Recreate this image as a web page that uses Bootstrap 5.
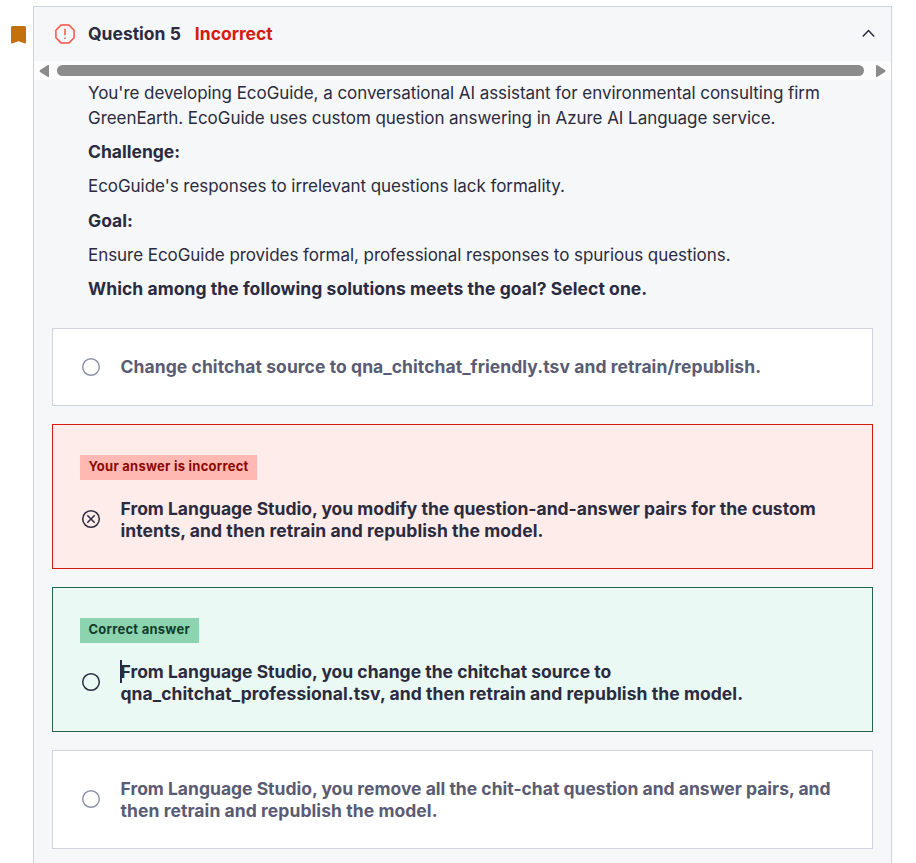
<!DOCTYPE html>
<html lang="en">
<head>
<meta charset="utf-8">
<meta name="viewport" content="width=device-width, initial-scale=1">
<title>Question 5</title>
<link href="https://cdn.jsdelivr.net/npm/bootstrap@5.3.0/dist/css/bootstrap.min.css" rel="stylesheet">
<style>
body{font-family:Inter,"Liberation Sans",sans-serif;font-size:17.5px;color:#2a2b3f;height:863px;overflow:hidden}
.bookmark{width:33px;padding:19px 0 0 11px}
.panel{width:859px;height:857px;margin-top:6px;background:#f6f7f9;border:1px solid #d1d2e0;border-bottom:0}
.panel-head{height:54px;padding:0 16px 0 21px;font-weight:700}
.panel-head .status-icon{margin-right:13px}
.chevron{margin-bottom:2px}
.wrong{color:#d41b12;margin-left:14px}
.scroller{height:19px;background:#fcfcfc;padding:0 5px}
.thumb{height:11px;border-radius:6px;background:#8b8b8b;margin:0 12px 0 8px}
.prompt{padding:.6px 54px 0;font-size:17px;line-height:25.2px;letter-spacing:-.05px}
.prompt p{margin:0 0 9px;white-space:nowrap}
.prompt .key{margin:-.8px 0 9.8px;font-size:17.5px;letter-spacing:0}
.prompt p:has(+ .key){margin-bottom:8.2px}
.prompt .key{margin-top:0}
.prompt .key,.answer{font-weight:700}
.prompt .key-wide{letter-spacing:.06px}
.answers{padding:17.4px 18px 0;gap:18px}
.answer{border:1px solid #d1d2e0;background:#fff;color:#595c73;padding:27px;line-height:21.6px}
.answer:last-child{padding-bottom:26.4px}
.answer-wrong{border-color:#d41b12;background:#feecea;color:#2a2b3f;padding-top:30px}
.answer-right{border-color:#23654b;background:#eaf9f4;color:#2a2b3f;padding-top:30px}
.choice{padding-left:1px;gap:19.5px;white-space:nowrap}
.choice-tall svg{margin-bottom:2px}
.airy{letter-spacing:.07px}
.tagline{height:25px;padding:0 8.5px;margin-bottom:18px;font-size:13px;letter-spacing:.25px;line-height:23px;width:fit-content;white-space:nowrap}
.tag-wrong{background:#ffb8b2;color:#8b0903}
.tag-right{background:#8cd4b0;color:#153b2b;padding-right:9px}
.caret{left:-.5px;top:-1px;width:2px;height:23px;background:#2a2b3f}
</style>
</head>
<body>
<div class="d-flex">
  <div class="bookmark flex-shrink-0"><svg class="d-block" width="15" height="25" viewBox="0 0 15 25"><path d="M1.5 7h12Q15 7 15 8.500V23.500Q15 25 13.500 24.300L7.500 22.300 1.500 24.300Q0 25 0 23.500V8.500Q0 7 1.500 7Z" fill="#c4710d"/></svg></div>
  <main class="panel flex-shrink-0">
    <header class="panel-head d-flex align-items-center">
      <svg class="status-icon" width="20" height="20" viewBox="0 0 20 20" fill="none" stroke="#ff5246" stroke-width="1.5"><path d="M6.200.9h7.600l5.300 5.300v7.600l-5.300 5.300H6.200L.9 13.800V6.200Z" stroke-linejoin="round"/><path d="M10 4.800v6.400M10 13.400v1.700"/></svg>
      <span>Question 5</span><span class="wrong">Incorrect</span>
      <svg class="chevron ms-auto" width="13" height="9" viewBox="0 0 13 9" fill="none" stroke="#2a2b3f" stroke-width="1.500"><path d="M.8 7.500 6.500 1.600l5.700 5.900"/></svg>
    </header>
    <div class="scroller d-flex align-items-center">
      <svg width="10" height="12" viewBox="0 0 10 12"><path d="M10 0v12H9L1 7Q0 6 1 5L9 0Z" fill="#8b8b8b"/></svg>
      <div class="thumb flex-grow-1"></div>
      <svg width="10" height="12" viewBox="0 0 10 12"><path d="M0 0v12h1l8-5q1-1 0-2L1 0Z" fill="#8b8b8b"/></svg>
    </div>
    <section class="prompt">
      <p>You're developing EcoGuide, a conversational AI assistant for environmental consulting firm<br>GreenEarth. EcoGuide uses custom question answering in Azure AI Language service.</p>
      <p class="key">Challenge:</p>
      <p>EcoGuide's responses to irrelevant questions lack formality.</p>
      <p class="key">Goal:</p>
      <p>Ensure EcoGuide provides formal, professional responses to spurious questions.</p>
      <p class="key key-wide">Which among the following solutions meets the goal? Select one.</p>
    </section>
    <section class="answers d-flex flex-column">
      <div class="answer"><div class="choice d-flex align-items-center">
        <svg width="20" height="20" viewBox="0 0 20 20" fill="none" stroke="#9194ac" stroke-width="1.500"><circle cx="10" cy="10" r="8.300"/></svg>
        <div class="airy">Change chitchat source to qna_chitchat_friendly.tsv and retrain/republish.</div></div></div>
      <div class="answer answer-wrong"><div class="tagline tag-wrong">Your answer is incorrect</div><div class="choice choice-tall d-flex align-items-center">
        <svg width="20" height="20" viewBox="0 0 20 20" fill="none" stroke="#2a2b3f" stroke-width="1.500"><circle cx="10" cy="10" r="8.300"/><path d="m6.300 6.300 7.400 7.400m0-7.400-7.400 7.400"/></svg>
        <div>From Language Studio, you modify the question-and-answer pairs for the custom<br><span class="airy">intents, and then retrain and republish the model.</span></div></div></div>
      <div class="answer answer-right"><div class="tagline tag-right">Correct answer</div><div class="choice choice-tall d-flex align-items-center">
        <svg width="20" height="20" viewBox="0 0 20 20" fill="none" stroke="#2a2b3f" stroke-width="1.500"><circle cx="10" cy="10" r="8.300"/></svg>
        <div class="position-relative"><span class="caret position-absolute"></span>From Language Studio, you change the chitchat source to<br><span class="airy">qna_chitchat_professional.tsv, and then retrain and republish the model.</span></div></div></div>
      <div class="answer"><div class="choice choice-tall d-flex align-items-center">
        <svg width="20" height="20" viewBox="0 0 20 20" fill="none" stroke="#9194ac" stroke-width="1.500"><circle cx="10" cy="10" r="8.300"/></svg>
        <div>From Language Studio, you remove all the chit-chat question and answer pairs, and<br><span class="airy">then retrain and republish the model.</span></div></div></div>
    </section>
  </main>
</div>
<script src="https://cdn.jsdelivr.net/npm/bootstrap@5.3.0/dist/js/bootstrap.bundle.min.js"></script>
</body>
</html>
